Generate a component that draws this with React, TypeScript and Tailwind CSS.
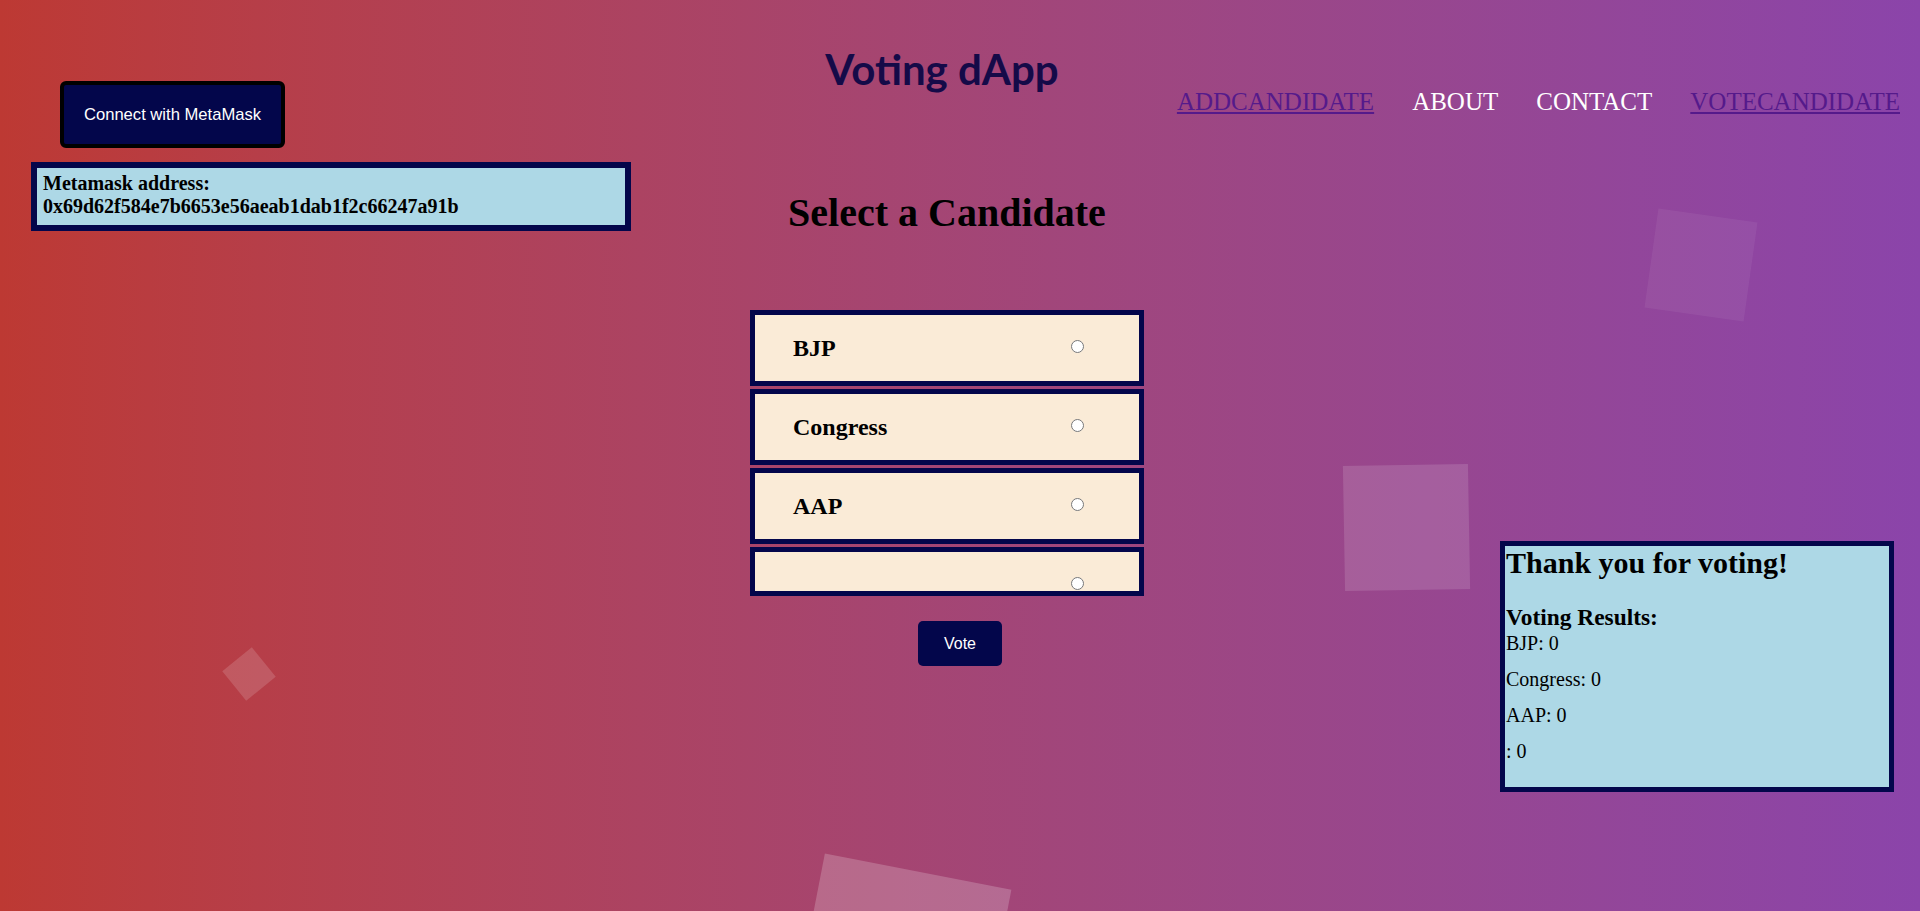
import React from "react";

const candidates = [
  { name: "BJP", votes: 0 },
  { name: "Congress", votes: 0 },
  { name: "AAP", votes: 0 },
  { name: "", votes: 0 },
];

const serif = { fontFamily: '"Liberation Serif", "Times New Roman", serif' };
const sans = { fontFamily: '"Liberation Sans", Arial, sans-serif' };

const App = () => {
  return (
    <div
      className="relative w-full h-[911px] overflow-hidden bg-gradient-to-r from-[#bd3933] to-[#8b44aa] text-black"
      style={serif}
    >
      {/* floating squares in the background */}
      <div className="absolute left-[1651px] top-[215px] w-[100px] h-[100px] rotate-[8deg] bg-white/[0.06]" />
      <div className="absolute left-[1344px] top-[465px] w-[125px] h-[125px] -rotate-1 bg-white/[0.13]" />
      <div className="absolute left-[230px] top-[655px] w-[38px] h-[38px] rotate-[51deg] bg-white/[0.15]" />
      <div className="absolute left-[805px] top-[870px] w-[190px] h-[190px] rotate-[11deg] bg-white/20" />

      <div className="relative z-10 flex items-start">
        {/* left: wallet */}
        <div className="w-[631px] shrink-0 flex flex-col items-start">
          <button
            className="ml-[60px] mt-[81px] w-[225px] h-[67px] flex items-center justify-center border-4 border-black rounded-[6px] bg-[#03064b] text-white text-[16.6px] leading-[18px]"
            style={sans}
          >
            Connect with MetaMask
          </button>
          <div className="ml-[31px] mt-[14px] w-[600px] h-[69px] border-[6px] border-[#03064b] bg-[#add8e6] pl-[6px] pt-[4px] text-[20px] leading-[23px] font-bold">
            <div>Metamask address:</div>
            <div>0x69d62f584e7b6653e56aeab1dab1f2c66247a91b</div>
          </div>
        </div>

        {/* middle: ballot */}
        <div className="flex-1 flex flex-col items-center pl-[102px]">
          <h1
            className="mt-[44px] mr-[10px] text-[42px] leading-[50px] font-bold text-[#150a48]"
            style={{ fontFamily: '"Comic Sans MS", Lato, sans-serif' }}
          >
            Voting dApp
          </h1>
          <h2 className="mt-[96px] text-[40px] leading-[46px] font-bold">Select a Candidate</h2>
          <div className="mt-[74px] w-[394px] flex flex-col gap-[3px]">
            {candidates.map((c, i) => (
              <label
                key={i}
                className={
                  "flex items-start border-[5px] border-[#03064b] bg-[#faebd7] pl-[38px] " +
                  (c.name ? "h-[76px]" : "h-[49px]")
                }
              >
                <span className="w-[278px] mt-[19px] text-[24px] leading-[28px] font-bold">{c.name}</span>
                <input type="radio" name="candidate" className="m-0 mt-[25px] w-[13px] h-[13px]" />
              </label>
            ))}
          </div>
          <button
            className="mt-[25px] ml-[26px] w-[84px] h-[45px] rounded-[5px] bg-[#03064b] text-white text-[16px] leading-[18px]"
            style={sans}
          >
            Vote
          </button>
        </div>

        {/* right: nav + results */}
        <div className="w-[759px] shrink-0 flex flex-col items-end">
          <nav className="mt-[87px] pr-[20px] flex gap-[38px] text-[25px] leading-[29px]">
            <a href="#" className="text-[#551a8b] underline">ADDCANDIDATE</a>
            <a href="#" className="text-white">ABOUT</a>
            <a href="#" className="text-white">CONTACT</a>
            <a href="#" className="text-[#551a8b] underline">VOTECANDIDATE</a>
          </nav>
          <div className="mt-[425px] mr-[26px] w-[394px] h-[251px] border-[5px] border-[#03064b] bg-[#add8e6] pl-[1px]">
            <h2 className="text-[30px] leading-[34px] font-bold">Thank you for voting!</h2>
            <h3 className="mt-[24px] text-[23.4px] leading-[26px] font-bold">Voting Results:</h3>
            <div className="mt-[2px] flex flex-col gap-[13px] text-[20px] leading-[23px]">
              {candidates.map((c, i) => (
                <p key={i}>
                  {c.name}: {c.votes}
                </p>
              ))}
            </div>
          </div>
        </div>
      </div>
    </div>
  );
};

export default App;
